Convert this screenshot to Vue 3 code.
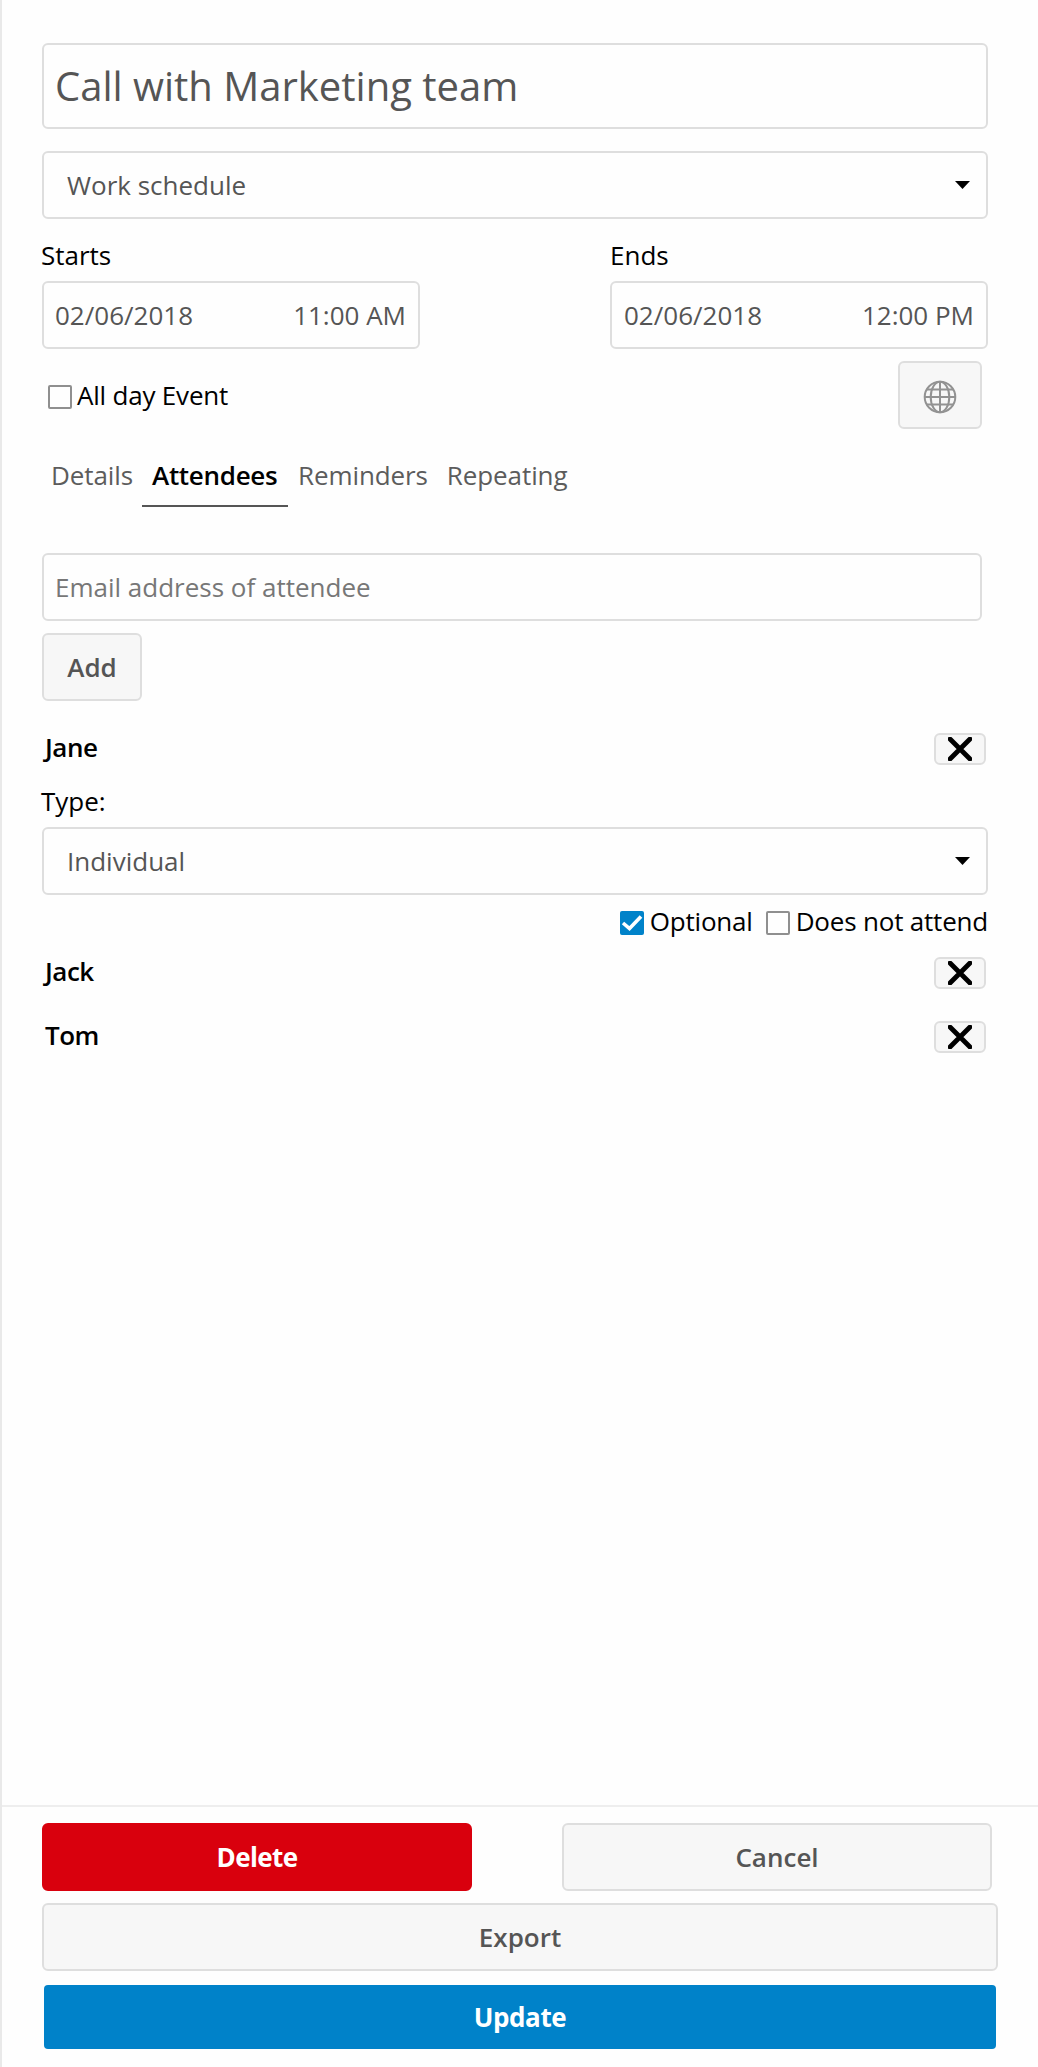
<script setup>
import { ref } from 'vue'

const title = ref('Call with Marketing team')
const calendar = ref('Work schedule')
const tabs = [
  { id: 'details', label: 'Details' },
  { id: 'attendees', label: 'Attendees' },
  { id: 'reminders', label: 'Reminders' },
  { id: 'repeating', label: 'Repeating' },
]
const activeTab = ref('attendees')
const periods = [
  { id: 'starts', label: 'Starts', date: '02/06/2018', time: '11:00 AM' },
  { id: 'ends', label: 'Ends', date: '02/06/2018', time: '12:00 PM' },
]
const attendees = ref([
  { name: 'Jane', open: true, type: 'Individual', optional: true, absent: false },
  { name: 'Jack', open: false },
  { name: 'Tom', open: false },
])
</script>

<template>
  <aside class="sidebar">
    <main class="content">
      <input v-model="title" class="field title" aria-label="Title" />

      <div class="select calendar">
        <span>{{ calendar }}</span>
        <svg class="caret" viewBox="0 0 15 8"><path d="M0 0h15L7.500 8z" /></svg>
      </div>

      <div class="periods">
        <div v-for="p in periods" :key="p.id" class="period">
          <label class="label">{{ p.label }}</label>
          <div class="field datetime">
            <span class="date">{{ p.date }}</span>
            <span class="time">{{ p.time }}</span>
          </div>
        </div>
      </div>

      <div class="allday">
        <label class="check"><span class="box"></span><span class="check-text">All day Event</span></label>
        <button class="button globe" aria-label="Timezone">
          <svg viewBox="0 0 34 34" fill="none" stroke="#929292" stroke-width="2">
            <circle cx="17" cy="17" r="15.300" />
            <ellipse cx="17" cy="17" rx="9.300" ry="15.300" />
            <path d="M17 1.700v30.600M1.700 17h30.600M4 9.500h26M4 24.500h26" />
          </svg>
        </button>
      </div>

      <nav class="tabs">
        <a v-for="t in tabs" :key="t.id" :class="['tab', { active: t.id === activeTab }]" @click="activeTab = t.id">
          <span>{{ t.label }}</span>
        </a>
      </nav>

      <input class="field email" placeholder="Email address of attendee" />
      <button class="button add">Add</button>

      <ul class="attendees">
        <li v-for="a in attendees" :key="a.name" class="attendee">
          <div class="attendee-head">
            <span class="name">{{ a.name }}</span>
            <button class="button remove" aria-label="Remove">
              <svg viewBox="0 0 24 24" fill="none" stroke="#000" stroke-width="4.800"><path d="M2 2l20 20M22 2L2 22" stroke-linecap="round" /></svg>
            </button>
          </div>
          <div v-if="a.open" class="options">
            <label class="label type">Type:</label>
            <div class="select">
              <span>{{ a.type }}</span>
              <svg class="caret" viewBox="0 0 15 8"><path d="M0 0h15L7.500 8z" /></svg>
            </div>
            <div class="flags">
              <label class="check">
                <span :class="['box', { checked: a.optional }]">
                  <svg viewBox="0 0 24 24" fill="none" stroke="#fff" stroke-width="3.600"><path d="M3 12l6.500 5.500L21 5.500" /></svg>
                </span>
                <span class="check-text">Optional</span>
              </label>
              <label class="check"><span class="box"></span><span class="check-text">Does not attend</span></label>
            </div>
          </div>
        </li>
      </ul>
    </main>

    <footer class="footer">
      <div class="pair">
        <button class="button danger">Delete</button>
        <button class="button">Cancel</button>
      </div>
      <button class="button export">Export</button>
      <button class="button primary">Update</button>
    </footer>
  </aside>
</template>

<style>
body {
  margin: 0;
  background: #fefefe;
}
</style>

<style scoped>
.sidebar,
.sidebar * {
  box-sizing: border-box;
}
.sidebar {
  display: flex;
  flex-direction: column;
  width: 1038px;
  height: 2067px;
  border-left: 2px solid #e9e9e9;
  background: #fefefe;
  color: #000;
  font: 26px/36px 'Open Sans', sans-serif;
}
.content {
  flex: 1;
  padding: 43px 50px 0 40px;
}
.field,
.select {
  display: flex;
  align-items: center;
  width: 100%;
  height: 68px;
  border: 2px solid #dedede;
  border-radius: 6px;
  background: #fefefe;
  color: #555;
  font: inherit;
  padding: 0 12px 0 11px;
  outline: none;
}
.title {
  height: 86px;
  padding-bottom: 2px;
  font-size: 40px;
}
.select {
  justify-content: space-between;
  padding: 0 16px 0 23px;
}
.calendar {
  margin-top: 22px;
}
.caret {
  width: 15px;
  height: 8px;
}
.periods {
  display: flex;
  justify-content: space-between;
  margin-top: 18px;
}
.period {
  width: 378px;
}
.label {
  display: block;
  height: 44px;
  margin-left: -1px;
}
.period + .period .label {
  margin-left: 0;
}
.datetime {
  justify-content: space-between;
}
.period + .period .datetime {
  padding-left: 12px;
}
.allday {
  display: flex;
  align-items: center;
  justify-content: space-between;
  margin-top: 12px;
  padding: 0 6px;
}
.allday .check {
  margin-top: 3px;
}
.allday .check-text {
  margin-left: 5px;
}
.check {
  display: flex;
  align-items: center;
}
.check-text {
  margin: -4px 0 0 6px;
  letter-spacing: -0.2px;
}
.box {
  display: block;
  width: 24px;
  height: 24px;
  border: 2px solid #8f8f8f;
  border-radius: 2px;
}
.box svg {
  display: none;
}
.box.checked {
  border: 0;
  background: #0082c9;
}
.box.checked svg {
  display: block;
  width: 24px;
  height: 24px;
}
.button {
  display: flex;
  align-items: center;
  justify-content: center;
  height: 68px;
  padding: 0;
  border: 2px solid #dedede;
  border-radius: 6px;
  background: #f7f7f7;
  color: #555;
  font: inherit;
  font-weight: 600;
}
.globe {
  width: 84px;
}
.globe svg {
  width: 34px;
  height: 34px;
  margin-top: 3px;
}
.tabs {
  display: flex;
  height: 52px;
  margin-top: 26px;
}
.tab {
  padding: 2px 10px 0 9px;
  color: #5c5c5c;
  letter-spacing: -0.1px;
}
.tab.active {
  width: 146px;
  margin-left: -1px;
  padding-left: 10px;
  border-bottom: 2px solid #555;
  color: #000;
  font-weight: 600;
  letter-spacing: -0.3px;
}
.tab.active + .tab {
  padding-left: 10px;
}
.email {
  margin-top: 46px;
  width: 940px;
}
.email::placeholder {
  color: #777;
  opacity: 1;
}
.add {
  width: 100px;
  margin-top: 12px;
}
.attendees {
  list-style: none;
  margin: 32px 0 0;
  padding: 0;
}
.attendee {
  margin-bottom: 32px;
}
.attendee-head {
  display: flex;
  justify-content: space-between;
  height: 32px;
  padding: 0 2px 0 3px;
}
.name {
  font-weight: 600;
  letter-spacing: -0.5px;
  margin-top: -4px;
}
.remove {
  width: 52px;
  height: 32px;
}
.remove svg {
  width: 24px;
  height: 24px;
}
.options {
  padding-top: 18px;
  margin-bottom: -14px;
}
.flags {
  display: flex;
  justify-content: flex-end;
  gap: 13px;
  height: 32px;
  margin-top: 12px;
}
.footer {
  height: 262px;
  padding: 16px 40px 0;
  border-top: 2px solid #eee;
}
.pair {
  display: flex;
  justify-content: space-between;
  padding-right: 6px;
}
.pair .button {
  width: 430px;
}
.button.danger {
  border-color: #d9000d;
  background: #d9000d;
  color: #fff;
  font-weight: 700;
  letter-spacing: -0.6px;
}
.export {
  width: 956px;
  margin-top: 12px;
}
.button.primary {
  width: 952px;
  height: 64px;
  margin: 14px 0 0 2px;
  border: 0;
  border-radius: 4px;
  background: #0082c9;
  color: #fff;
  font-weight: 700;
  letter-spacing: -0.4px;
}
</style>
